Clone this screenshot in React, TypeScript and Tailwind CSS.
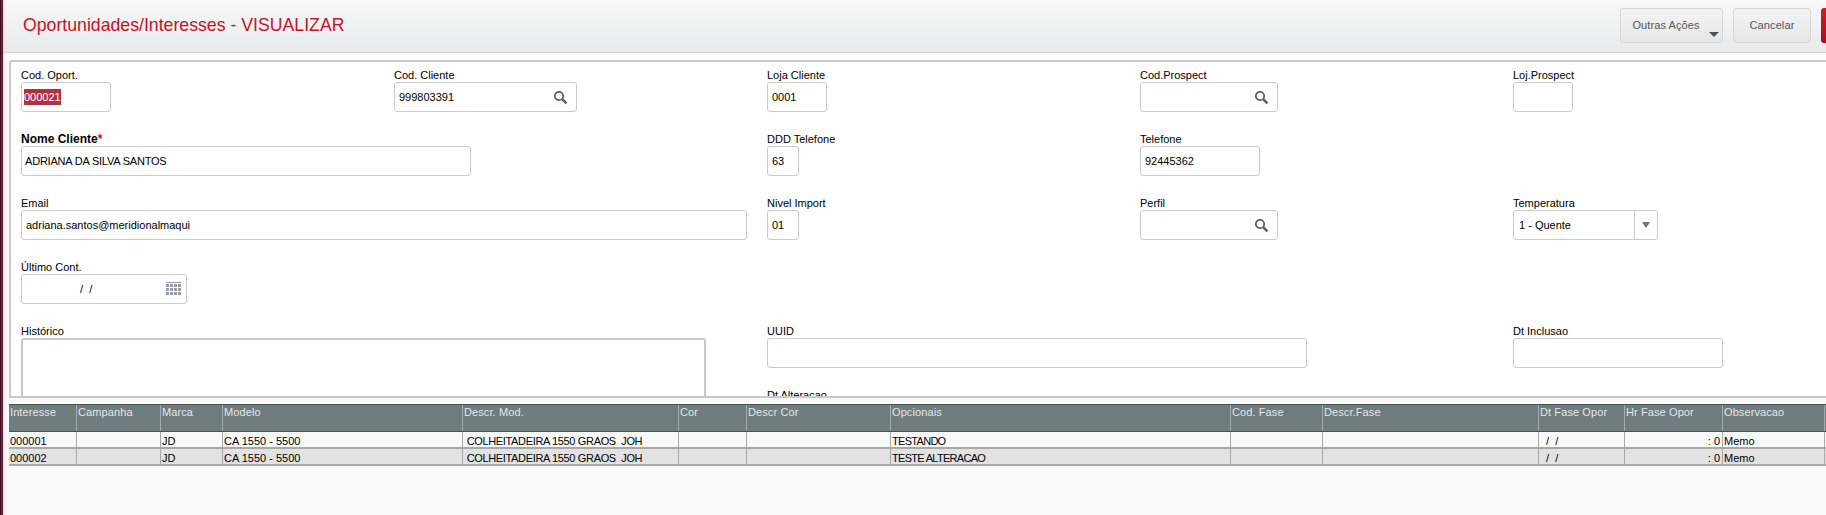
const font = "font-['Liberation_Sans',Arial,sans-serif]";

function SearchIcon() {
  return (
    <svg width="15" height="15" viewBox="0 0 15 15" className="shrink-0">
      <circle cx="6" cy="6" r="4.2" fill="none" stroke="#555c66" strokeWidth="1.7" />
      <path d="M9.2 9.2 L13.4 13.4" stroke="#555c66" strokeWidth="2.4" />
    </svg>
  );
}

function CalendarIcon() {
  const cells = [];
  for (let r = 0; r < 3; r++) for (let c = 0; c < 4; c++) cells.push(<rect key={r + "-" + c} x={c * 4} y={2 + r * 4} width="3" height="3" fill="#959ca8" />);
  return (
    <svg width="15" height="14" viewBox="0 0 15 14" className="shrink-0">
      <rect x="0" y="0" width="15" height="1" fill="#959ca8" />
      {cells}
    </svg>
  );
}

function Field({ label, value, w, icon, bold, star, sel, tight }: { label: string; value?: string; w: string; icon?: React.ReactNode; bold?: boolean; star?: boolean; sel?: boolean; tight?: boolean }) {
  return (
    <div className="h-[64px] flex flex-col">
      <div className={"h-[14px] leading-[14px] text-[11px] text-black whitespace-nowrap " + (bold ? "font-bold text-[12px]" : "")}>
        {label}
        {star && <span className="text-[#d0021b]">*</span>}
      </div>
      <div className={"h-[30px] flex items-center justify-between pl-[4px] pr-[8px] bg-white border border-[#c8cbce] rounded-[3px] text-[11px] text-black " + w}>
        {sel ? <span className="bg-[#b1323f] text-white -ml-[2px]">{value}</span> : <span className={tight ? "-ml-px tracking-[-0.2px]" : ""}>{value}</span>}
        {icon}
      </div>
    </div>
  );
}

const columns = [
  { w: "w-[68px]", h: "Interesse", t: "" },
  { w: "w-[84px]", h: "Campanha", t: "" },
  { w: "w-[62px]", h: "Marca", t: "" },
  { w: "w-[240px]", h: "Modelo", t: "" },
  { w: "w-[216px]", h: "Descr. Mod.", t: "tracking-[-0.35px]" },
  { w: "w-[68px]", h: "Cor", t: "" },
  { w: "w-[144px]", h: "Descr Cor", t: "" },
  { w: "w-[340px]", h: "Opcionais", t: "tracking-[-0.7px]" },
  { w: "w-[92px]", h: "Cod. Fase", t: "" },
  { w: "w-[216px]", h: "Descr.Fase", t: "" },
  { w: "w-[86px]", h: "Dt Fase Opor", t: "" },
  { w: "w-[98px]", h: "Hr Fase Opor", t: "" },
  { w: "w-[102px]", h: "Observacao", t: "" },
  { w: "w-[40px]", h: "", t: "" },
];

const rows = [
  ["000001", "", "JD", "CA 1550 - 5500", " COLHEITADEIRA 1550 GRAOS  JOH", "", "", "TESTANDO", "", "", "  /  /", ": 0", "Memo", ":"],
  ["000002", "", "JD", "CA 1550 - 5500", " COLHEITADEIRA 1550 GRAOS  JOH", "", "", "TESTE ALTERACAO", "", "", "  /  /", ": 0", "Memo", ":"],
];

export default function App() {
  return (
    <div className={"w-[1826px] h-[515px] overflow-hidden flex bg-[#f9f9f9] " + font}>
      <div className="w-[3px] shrink-0 bg-[#8e1224] border-l border-[#3c1030]" />
      <div className="flex-1 min-w-0 flex flex-col">
        <header className="h-[53px] shrink-0 flex items-start justify-between pl-[20px] bg-gradient-to-b from-[#f8f8f8] to-[#e8eaeb] border-b border-[#d6d6d6]">
          <h1 className="mt-[14px] text-[17.7px] leading-[22px] text-[#c4122a]">Oportunidades/Interesses - VISUALIZAR</h1>
          <div className="flex mt-[8px] gap-[10px] text-[11px] tracking-[0.1px] text-[#50565e] -mr-[20px]">
            <div className="relative w-[103px] h-[35px] flex items-center justify-center pr-[11px] rounded-[3px] border border-[#d5d6d8] bg-gradient-to-b from-[#f4f4f4] to-[#e6e6e6]">
              Outras Ações
              <span className="absolute right-[3px] bottom-[5px] border-x-[5px] border-x-transparent border-t-[5px] border-t-[#4b5057]" />
            </div>
            <div className="w-[78px] h-[35px] flex items-center justify-center rounded-[3px] border border-[#d5d6d8] bg-gradient-to-b from-[#f4f4f4] to-[#e6e6e6]">Cancelar</div>
            <div className="w-[25px] h-[35px] rounded-l-[3px] bg-gradient-to-b from-[#c8202c] to-[#a50f1c]" />
          </div>
        </header>
        <div className="h-[7px] shrink-0 bg-white" />
        <section className="h-[338px] shrink-0 ml-[6px] -mr-[4px] pl-[10px] pt-[6px] bg-white border-2 border-r-0 border-[#c9c9c9] rounded-tl-[3px] overflow-hidden grid grid-cols-[373px_373px_373px_373px_1fr] content-start">
          <Field label="Cod. Oport." value="000021" w="w-[90px]" sel />
          <Field label="Cod. Cliente" value="999803391" w="w-[183px]" icon={<SearchIcon />} />
          <Field label="Loja Cliente" value="0001" w="w-[60px]" />
          <Field label="Cod.Prospect" w="w-[138px]" icon={<SearchIcon />} />
          <Field label="Loj.Prospect" w="w-[60px]" />

          <div className="col-span-2">
            <Field label="Nome Cliente" bold star value="ADRIANA DA SILVA SANTOS" w="w-[450px]" tight />
          </div>
          <Field label="DDD Telefone" value="63" w="w-[32px]" />
          <Field label="Telefone" value="92445362" w="w-[120px]" />
          <div />

          <div className="col-span-2">
            <Field label="Email" value="adriana.santos@meridionalmaqui" w="w-[726px]" />
          </div>
          <Field label="Nivel Import" value="01" w="w-[32px]" />
          <Field label="Perfil" w="w-[138px]" icon={<SearchIcon />} />
          <div className="h-[64px] flex flex-col">
            <div className="h-[14px] leading-[14px] text-[11px] text-black">Temperatura</div>
            <div className="h-[30px] w-[145px] flex items-center bg-white border border-[#c8cbce] rounded-[3px] text-[11px] text-black">
              <span className="flex-1 pl-[5px]">1 - Quente</span>
              <span className="w-[23px] h-full flex items-center justify-center border-l border-[#c8cbce]">
                <span className="border-x-[4px] border-x-transparent border-t-[6px] border-t-[#6d7278]" />
              </span>
            </div>
          </div>

          <div className="col-span-5">
            <div className="h-[64px] flex flex-col">
              <div className="h-[14px] leading-[14px] text-[11px] text-black">Último Cont.</div>
              <div className="h-[30px] w-[166px] flex items-center justify-between pr-[5px] pl-[58px] bg-white border border-[#c8cbce] rounded-[3px] text-[11px] text-black">
                <span>/&nbsp;&nbsp;/</span>
                <CalendarIcon />
              </div>
            </div>
          </div>

          <div className="col-span-2 h-[64px] flex flex-col">
            <div className="h-[14px] leading-[14px] text-[11px] text-black">Histórico</div>
            <div className="h-[80px] w-[685px] shrink-0 bg-white border-2 border-[#c8c8c8] rounded-[3px]" />
          </div>
          <div className="col-span-2">
            <Field label="UUID" w="w-[540px]" />
          </div>
          <Field label="Dt Inclusao" w="w-[210px]" />
          <div className="col-span-2" />
          <div className="col-span-3 h-[14px] leading-[14px] text-[11px] text-black">Dt Alteracao</div>
        </section>
        <div className="h-[6px] shrink-0" />
        <section className="ml-[6px] -mr-[4px] text-[11px] overflow-hidden">
          <div className="flex h-[28px] bg-[#6f7c80] border-y border-[#4c5154] text-[#e4e7e8] tracking-[0.1px]">
            {columns.map((c, i) => (
              <div key={i} className={"shrink-0 pl-[1px] pt-[1px] leading-[13px] whitespace-nowrap border-r border-[#a3acaf] " + c.w}>{c.h}</div>
            ))}
          </div>
          {rows.map((r, ri) => (
            <div key={ri} className={"flex h-[17px] leading-[16px] border-b-2 border-[#a8a8a8] text-black " + (ri === 0 ? "bg-[#f9f9f9]" : "bg-[#e2e2e2]")}>
              {r.map((v, i) => (
                <div key={i} className={"shrink-0 pl-[1px] pt-[1px] whitespace-pre border-r border-[#a8a8a8] " + columns[i].w + " " + columns[i].t + (i === 11 ? " text-right pr-[2px]" : "")}>{v}</div>
              ))}
            </div>
          ))}
        </section>
      </div>
    </div>
  );
}
